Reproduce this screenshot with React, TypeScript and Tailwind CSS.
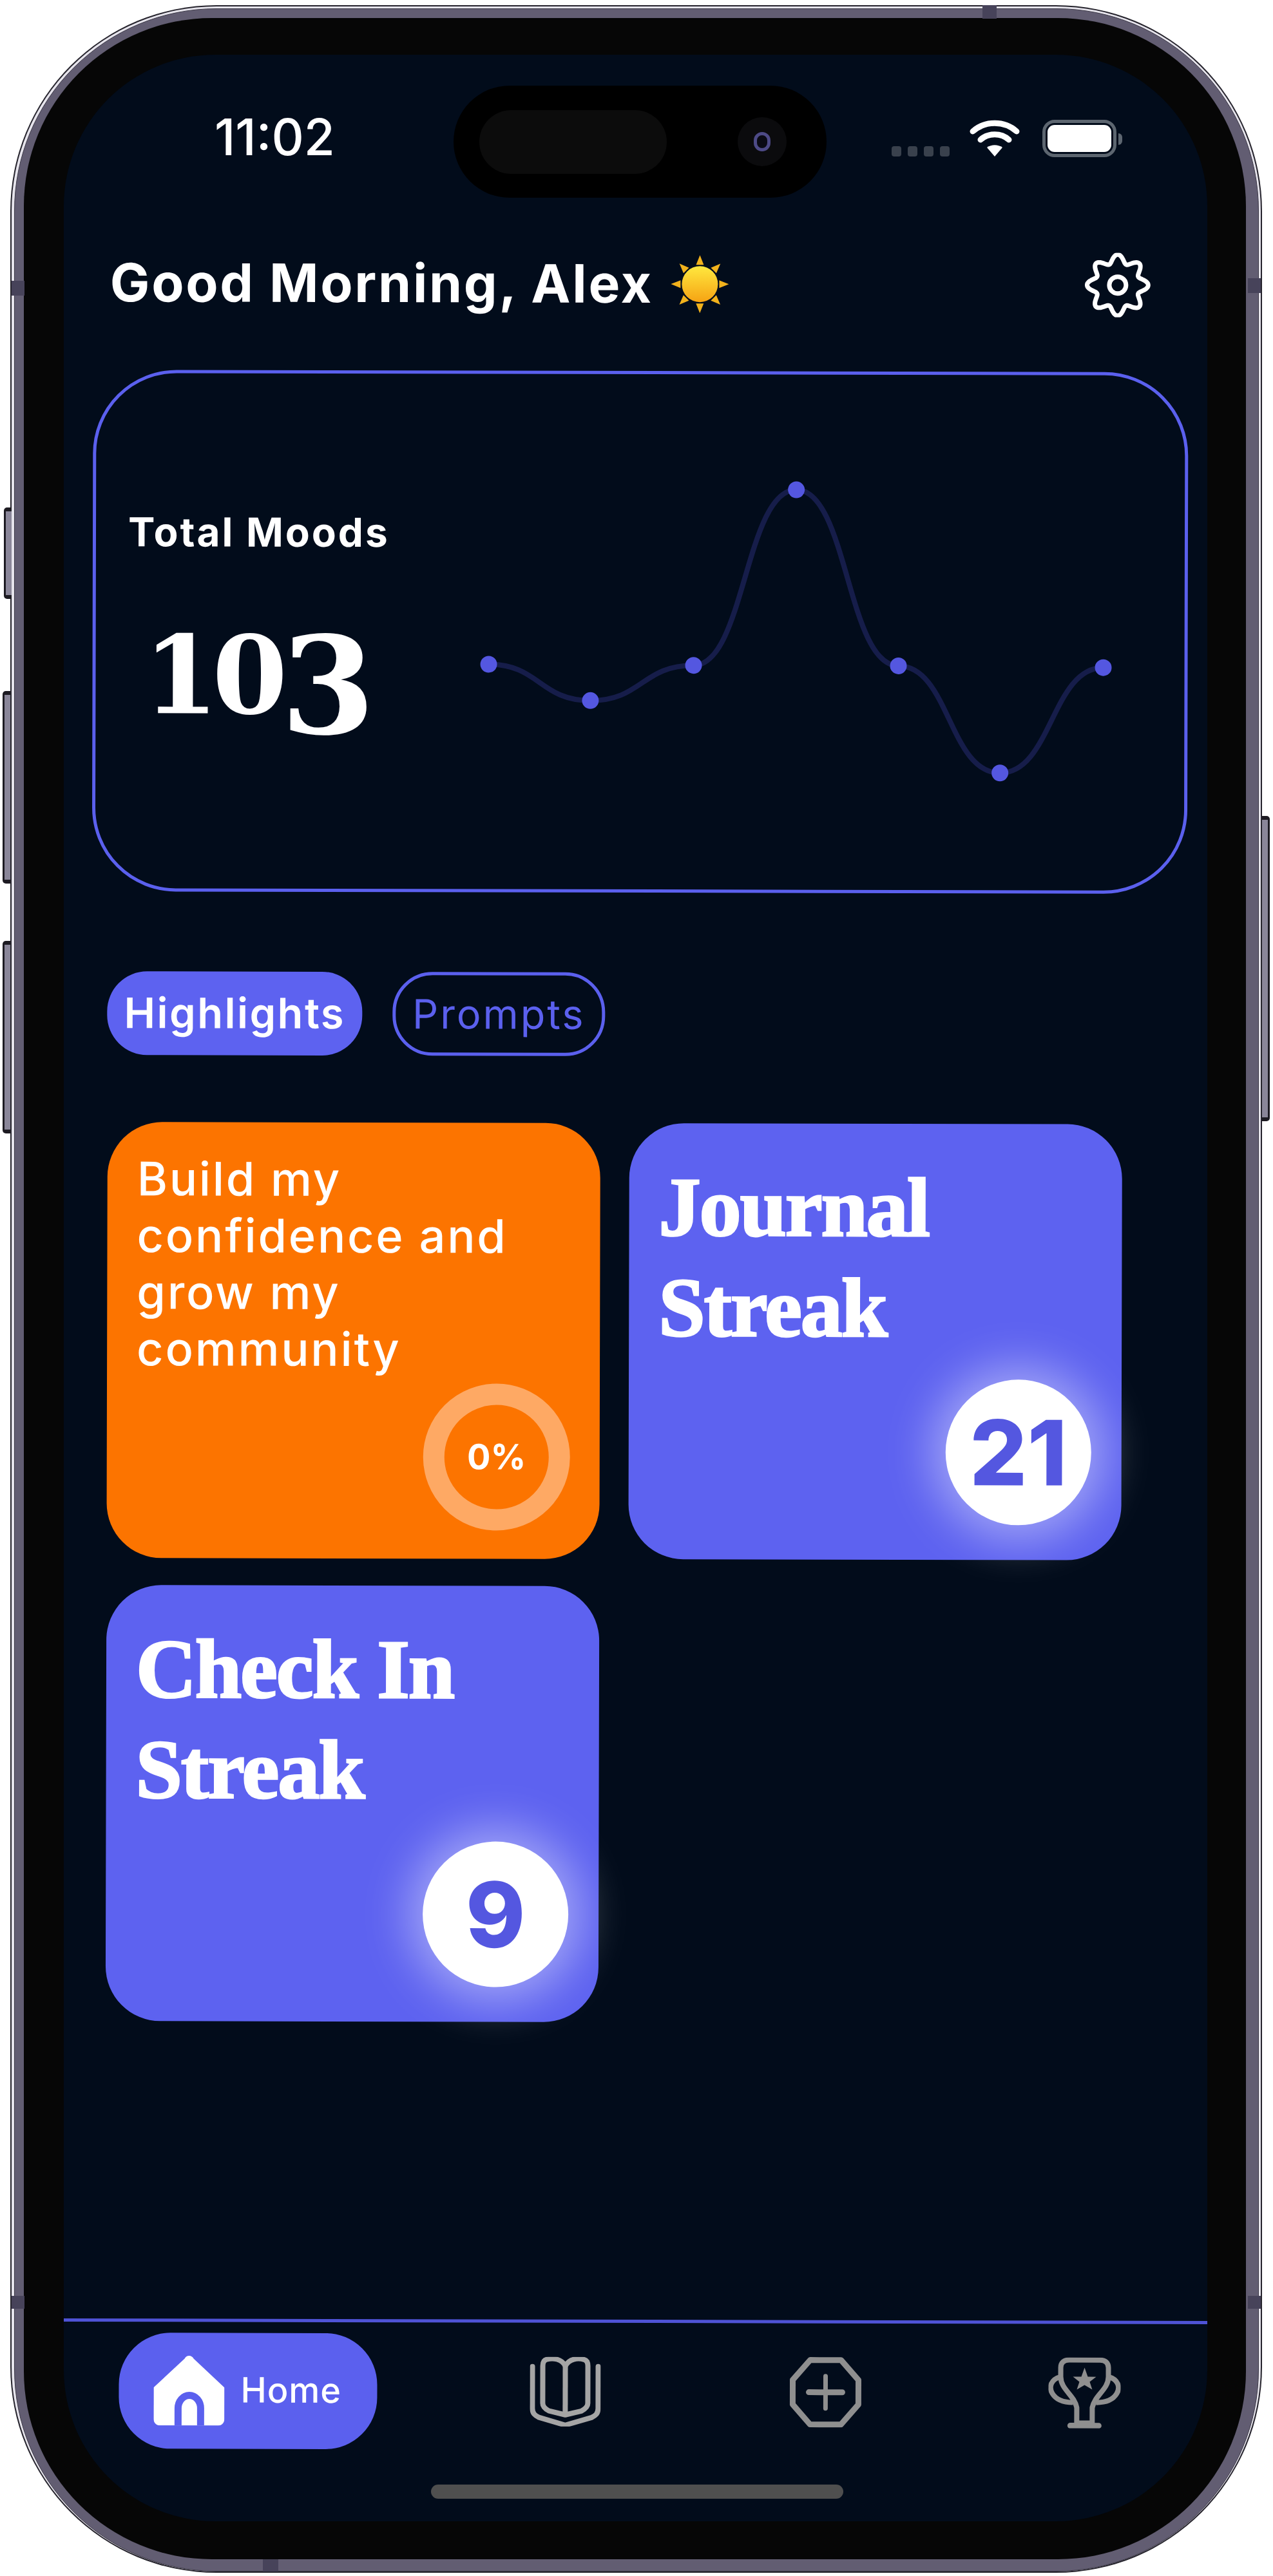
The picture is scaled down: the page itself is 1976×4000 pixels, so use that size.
const chartPoints = [
  [28, 291],
  [186, 347],
  [346, 292],
  [505, 19],
  [664, 292],
  [822, 458],
  [982, 294],
];

function chartPath(): string {
  let d = `M${chartPoints[0][0]},${chartPoints[0][1]}`;
  for (let i = 1; i < chartPoints.length; i++) {
    const [x0, y0] = chartPoints[i - 1];
    const [x1, y1] = chartPoints[i];
    const mid = (x0 + x1) / 2;
    d += ` C${mid},${y0} ${mid},${y1} ${x1},${y1}`;
  }
  return d;
}

function gearPath(): string {
  const pts: string[] = [];
  for (let i = 0; i <= 240; i++) {
    const t = (i / 240) * Math.PI * 2;
    const r = 41 + 6.5 * Math.cos(8 * t);
    const x = 51 + r * Math.sin(t);
    const y = 50 - r * Math.cos(t);
    pts.push(`${x.toFixed(1)},${y.toFixed(1)}`);
  }
  return `M${pts.join(" L")} Z`;
}

function SunIcon() {
  const rays = [0, 45, 90, 135, 180, 225, 270, 315];
  return (
    <svg width="93" height="90" viewBox="0 0 93 90" className="shrink-0">
      <defs>
        <linearGradient id="sun-fill" x1="0" y1="0" x2="0" y2="1">
          <stop offset="0%" stopColor="#ffe83f" />
          <stop offset="100%" stopColor="#f6a313" />
        </linearGradient>
      </defs>
      {rays.map((a) => (
        <polygon key={a} points="46.5,0 40.5,15 52.5,15" fill="#f2b21c" transform={`rotate(${a} 46.5 45)`} />
      ))}
      <circle cx="46.5" cy="45" r="28" fill="url(#sun-fill)" />
    </svg>
  );
}

function SettingsIcon() {
  return (
    <svg width="102" height="100" viewBox="0 0 102 100" fill="none" stroke="#fff" strokeWidth="7">
      <path d={gearPath()} strokeLinejoin="round" />
      <circle cx="51" cy="50" r="13" />
    </svg>
  );
}

function WifiIcon() {
  return (
    <svg width="78" height="57" viewBox="0 0 78 57" fill="none" stroke="#fff" strokeWidth="9" strokeLinecap="round">
      <path d="M5 18 C24 1 54 1 73 18" />
      <path d="M17 31 C29 20 49 20 61 31" />
      <path d="M39 57 L27 43 C34 38 44 38 51 43 Z" fill="#fff" stroke="none" />
    </svg>
  );
}

function HomeIcon() {
  return (
    <svg width="110" height="109" viewBox="0 0 110 109" className="shrink-0">
      <path
        d="M48 5 C51 -1 59 -1 62 5 L110 50 L110 98 C110 105 106 109 100 109 L10 109 C4 109 0 105 0 98 L0 50 Z"
        fill="#fff"
      />
      <path d="M38 109 V82 a17.5 20 0 0 1 35 0 V109" fill="none" stroke="#5b60ee" strokeWidth="11" />
    </svg>
  );
}

function BookIcon() {
  return (
    <svg width="110" height="108" viewBox="0 0 110 108" fill="none" stroke="#a5a5a5" strokeWidth="8" strokeLinejoin="round">
      <path d="M4 15 V80 C4 88 8 91 14 94 L55 106 L96 94 C102 91 106 88 106 80 V15" strokeLinecap="round" />
      <path d="M55 14 C49 3 36 1 26 4 C22 5 20 9 20 14 V72 C20 78 24 81 30 84 L55 90 L80 84 C86 81 90 78 90 72 V14 C90 9 88 5 84 4 C74 1 61 3 55 14 Z" />
      <path d="M55 14 V88" />
    </svg>
  );
}

function AddIcon() {
  return (
    <svg width="112" height="110" viewBox="0 0 112 110" fill="none" stroke="#8f8f8f" strokeWidth="9" strokeLinejoin="round">
      <path d="M32 5 H80 L107 36 V74 L80 105 H32 L5 74 V36 Z" />
      <path d="M56 30 V80" strokeLinecap="round" strokeWidth="7" />
      <path d="M30 55 H82" strokeLinecap="round" strokeWidth="9" />
    </svg>
  );
}

function TrophyIcon() {
  return (
    <svg width="112" height="110" viewBox="0 0 112 110" fill="none" stroke="#8f8f8f" strokeWidth="8" strokeLinejoin="round">
      <path d="M19 30 V16 C19 8 24 4 32 4 H80 C88 4 93 8 93 16 V30 C93 50 72 58 68 78 V102 H44 V78 C40 58 19 50 19 30 Z" />
      <path d="M19 30 C4 34 0 46 6 56 C12 66 24 70 38 70" />
      <path d="M93 30 C108 34 112 46 106 56 C100 66 88 70 74 70" />
      <path d="M34 106 H78" strokeWidth="9" strokeLinecap="round" />
      <polygon points="56,16 61,30 74,30 64,38 68,50 56,43 44,50 48,38 38,30 51,30" fill="#8f8f8f" stroke="none" />
    </svg>
  );
}

function StreakCard({ lines, value }: { lines: string[]; value: string }) {
  return (
    <div className="relative h-[677px] w-[765px] rounded-[85px] bg-[#5d62f0] pl-[46px] pt-[52px]">
      <div className="font-['Liberation_Serif',serif] text-[130px] font-bold leading-[156px] tracking-[-2px] text-white [-webkit-text-stroke:3px_#fff]">
        {lines.map((l) => (
          <div key={l}>{l}</div>
        ))}
      </div>
      <div className="absolute bottom-[54px] right-[47px] flex h-[226px] w-[226px] items-center justify-center rounded-full bg-white text-[140px] font-extrabold text-[#5457e0] shadow-[0_0_70px_22px_rgba(255,255,255,0.42)]">
        {value}
      </div>
    </div>
  );
}

export default function App() {
  const side = "absolute w-[12px] rounded-l-[5px] border-y-[6px] border-l-[3px] border-[#1d1b22] bg-[#8a8699]";
  const band = "absolute bg-[#47435a]";
  return (
    <div className="h-[4000px] w-[1976px] bg-white pl-[16px] pt-[8px] font-['Inter',sans-serif]">
      <div className="relative h-[3987px] w-[1943px]">
        <div className={`${side} left-[-10px] top-[780px] h-[142px]`} />
        <div className={`${side} left-[-12px] top-[1065px] h-[299px]`} />
        <div className={`${side} left-[-12px] top-[1453px] h-[299px]`} />
        <div className={`${side} right-[-12px] top-[1259px] h-[474px] rotate-180`} />

        <div className="h-full rounded-[320px] bg-[#26242d] p-[2px]">
          <div className="h-full rounded-[318px] bg-[#e6e4ec] pb-0 pl-[4px] pr-[3px] pt-[3px]">
            <div className="h-full rounded-[314px] border border-[#3b3846] bg-[#625d72] pb-[18px] pl-[14px] pr-[19px] pt-[14px]">
              <div className="h-full rounded-[292px] bg-[#060606] pb-[59px] pl-[62px] pr-[60px] pt-[57px]">
                <div className="relative flex h-full flex-col overflow-hidden rounded-[235px] bg-[#020c1b]">
                  <div className="flex h-[305px] shrink-0 items-start pl-[234px] pr-[132px] pt-[90px]">
                    <span className="text-[78px] font-medium leading-[76px] text-white">11:02</span>
                    <div className="ml-auto flex items-start pt-[11px]">
                      <div className="mr-[31px] mt-[41px] flex gap-[10px]">
                        <div className="h-[16px] w-[15px] rounded-[4px] bg-[#39414d]" />
                        <div className="h-[16px] w-[15px] rounded-[4px] bg-[#39414d]" />
                        <div className="h-[16px] w-[15px] rounded-[4px] bg-[#39414d]" />
                        <div className="h-[16px] w-[15px] rounded-[4px] bg-[#39414d]" />
                      </div>
                      <WifiIcon />
                      <div className="ml-[35px] h-[58px] w-[115px] rounded-[19px] border-[5px] border-[#5d6670] p-[3px]">
                        <div className="h-full rounded-[11px] bg-white" />
                      </div>
                      <div className="ml-[3px] mt-[21px] h-[18px] w-[6px] rounded-r-full bg-[#5d6670]" />
                    </div>
                  </div>

                  <div className="absolute left-[605px] top-[48px] flex h-[174px] w-[579px] items-center rounded-full bg-black pl-[40px]">
                    <div className="h-[99px] w-[291px] rounded-full bg-[#0c0c0c]" />
                    <div className="ml-[110px] flex h-[76px] w-[76px] items-center justify-center rounded-full bg-[#0b0b0d]">
                      <div className="h-[30px] w-[26px] rounded-full border-[5px] border-[#4d4a86] bg-[#0a0a14]" />
                    </div>
                  </div>

                  <div className="flex grow rotate-[0.13deg] flex-col">
                    <div className="flex h-[102px] items-center pl-[68px] pr-[92px]">
                      <h1 className="text-[82px] font-bold leading-none tracking-[2.8px] text-white">Good Morning, Alex</h1>
                      <div className="ml-[26px]">
                        <SunIcon />
                      </div>
                      <div className="ml-auto">
                        <SettingsIcon />
                      </div>
                    </div>

                    <div className="ml-[42px] mt-[84px] flex h-[810px] w-[1700px] items-center rounded-[130px] border-[5px] border-[#5b60ee] pl-[50px]">
                      <div className="w-[530px] shrink-0">
                        <div className="relative top-[-30px] text-[62px] font-bold leading-none tracking-[3px] text-white">Total Moods</div>
                        <div className="ml-[24px] mt-[62px] whitespace-nowrap font-['DejaVu_Serif',serif] text-[168px] font-bold leading-[170px] tracking-[-10px] text-white">
                          10<span className="inline-block translate-y-[31px] text-[210px] leading-[170px]">3</span>
                        </div>
                      </div>
                      <svg width="1010" height="480" viewBox="0 0 1010 480" className="ml-[2px] mt-[0px] shrink-0" fill="none">
                        <path d={chartPath()} stroke="#161d4a" strokeWidth="8" />
                        {chartPoints.map(([x, y]) => (
                          <circle key={x} cx={x} cy={y} r="13" fill="#5457e0" />
                        ))}
                      </svg>
                    </div>

                    <div className="ml-[66px] mt-[124px] flex gap-[47px]">
                      <div className="flex h-[130px] w-[396px] items-center justify-center rounded-[62px] bg-[#5d62f0] text-[65px] font-semibold tracking-[2.5px] text-white">
                        Highlights
                      </div>
                      <div className="flex h-[130px] w-[330px] items-center justify-center rounded-[62px] border-[5px] border-[#5b60ee] text-[63px] font-normal tracking-[3px] text-[#5b60ee]">
                        Prompts
                      </div>
                    </div>

                    <div className="ml-[67px] mt-[104px] grid w-[1575px] grid-cols-[765px_765px] gap-x-[45px] gap-y-[42px]">
                      <div className="relative h-[677px] w-[765px] rounded-[85px] bg-[#fc7400] pl-[46px] pt-[44px] text-[72px] font-medium leading-[88px] tracking-[2.8px] text-white">
                        <div>Build my</div>
                        <div>confidence and</div>
                        <div>grow my</div>
                        <div>community</div>
                        <div className="absolute bottom-[44px] right-[46px] flex h-[228px] w-[228px] items-center justify-center rounded-full border-[33px] border-[#fea964] text-[54px] font-bold leading-none tracking-normal">
                          0%
                        </div>
                      </div>
                      <StreakCard lines={["Journal", "Streak"]} value="21" />
                      <StreakCard lines={["Check In", "Streak"]} value="9" />
                    </div>

                    <div className="-mx-[8px] mt-auto border-t-[5px] border-[#4f53d6] pb-[111px] pl-[97px] pt-[17px]">
                      <div className="flex items-center">
                        <div className="flex h-[180px] w-[401px] items-center gap-[25px] rounded-[80px] bg-[#5b60ee] pb-[2px] pl-[54px]">
                          <HomeIcon />
                          <span className="text-[54px] font-medium leading-none tracking-[1px] text-white">Home</span>
                        </div>
                        <div className="ml-[237px]">
                          <BookIcon />
                        </div>
                        <div className="ml-[293px]">
                          <AddIcon />
                        </div>
                        <div className="ml-[290px]">
                          <TrophyIcon />
                        </div>
                      </div>
                    </div>
                  </div>

                  <div className="absolute bottom-[35px] left-[570px] h-[22px] w-[640px] rounded-full bg-[#4f4f4f]" />
                </div>
              </div>
            </div>
          </div>
        </div>

        <div className={`${band} left-[2px] top-[428px] h-[23px] w-[20px]`} />
        <div className={`${band} right-[2px] top-[424px] h-[23px] w-[20px]`} />
        <div className={`${band} left-[2px] top-[3557px] h-[20px] w-[20px]`} />
        <div className={`${band} right-[2px] top-[3557px] h-[20px] w-[20px]`} />
        <div className={`${band} left-[1509px] top-[0px] h-[21px] w-[22px]`} />
        <div className={`${band} bottom-[2px] left-[392px] h-[19px] w-[24px]`} />
      </div>
    </div>
  );
}
